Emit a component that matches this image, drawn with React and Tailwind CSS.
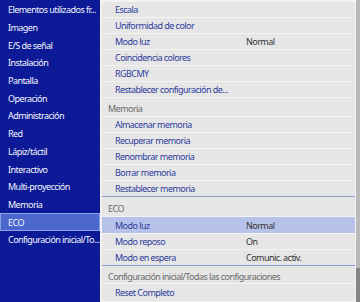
import React from "react";

const leftItems = [
  "Elementos utilizados fr...",
  "Imagen",
  "E/S de señal",
  "Instalación",
  "Pantalla",
  "Operación",
  "Administración",
  "Red",
  "Lápiz/táctil",
  "Interactivo",
  "Multi-proyección",
  "Memoria",
  "ECO",
  "Configuración inicial/To...",
];

// rows of the right panel: kind = item | header, h = row height in px
const rightRows = [
  { kind: "item", label: "Escala", h: "h-[16px]" },
  { kind: "item", label: "Uniformidad de color", h: "h-[16px]" },
  { kind: "item", label: "Modo luz", value: "Normal", h: "h-[16px]" },
  { kind: "item", label: "Coincidencia colores", h: "h-[16px]" },
  { kind: "item", label: "RGBCMY", h: "h-[16px]" },
  { kind: "item", label: "Restablecer configuración de...", h: "h-[16px]" },
  { kind: "header", label: "Memoria", h: "h-[19px]" },
  { kind: "item", label: "Almacenar memoria", h: "h-[16px]" },
  { kind: "item", label: "Recuperar memoria", h: "h-[16px]" },
  { kind: "item", label: "Renombrar memoria", h: "h-[16px]" },
  { kind: "item", label: "Borrar memoria", h: "h-[16px]" },
  { kind: "item", label: "Restablecer memoria", last: true, h: "h-[16px]" },
  { kind: "header", label: "ECO", h: "h-[20px]" },
  { kind: "item", label: "Modo luz", value: "Normal", selected: true, h: "h-[17px]" },
  { kind: "item", label: "Modo reposo", value: "On", h: "h-[16px]" },
  { kind: "item", label: "Modo en espera", value: "Comunic. activ.", last: true, h: "h-[16px]" },
  { kind: "header", label: "Configuración inicial/Todas las configuraciones", h: "h-[18px]" },
  { kind: "item", label: "Reset Completo", h: "h-[18px]" },
];

function RightRow({ row }) {
  if (row.kind === "header") {
    return (
      <div className={row.h + " flex items-center pt-[3px] pl-[6px] text-[#6a6a6a] border-b border-[#f3f3f3] shrink-0"}>
        {row.label}
      </div>
    );
  }
  return (
    <div
      className={
        row.h +
        " flex items-center pl-[13px] border-b shrink-0 " +
        (row.last ? "border-[#8d9bd0] " : "border-[#f3f3f3] ") +
        (row.selected ? "bg-[#b7c2ea]" : "")
      }
    >
      <span className="w-[131px] whitespace-nowrap text-[#2c3c9c]">{row.label}</span>
      {row.value && <span className="text-[#333333]">{row.value}</span>}
    </div>
  );
}

export default function App() {
  return (
    <div
      className="w-[360px] h-[302px] flex overflow-hidden bg-[#e6e6e6] text-[9px] tracking-[-0.55px] leading-none"
      style={{ fontFamily: '"Noto Sans", "Open Sans", sans-serif' }}
    >
      <div className="w-[100px] h-full bg-[#0c1a97] pt-[1px] shrink-0 overflow-hidden">
        {leftItems.map((label) => (
          <div
            key={label}
            className={
              "h-[17.7px] flex items-center whitespace-nowrap text-[#f4f5fb] " +
              (label === "ECO" ? "bg-[#4c68cf] border border-[#8ea0e4] pl-[7px]" : "pl-[8px]")
            }
          >
            {label}
          </div>
        ))}
      </div>
      <div className="w-[2px] bg-[#f2f2f2] shrink-0" />
      <div className="flex-1 flex flex-col border-t-2 border-[#f3f3f3] border-r border-r-[#f3f3f3]">
        {rightRows.map((row, i) => (
          <RightRow key={i} row={row} />
        ))}
      </div>
      <div className="w-[4px] h-full flex flex-col bg-[#b9b9b9] shrink-0">
        <div className="flex-1" />
        <div className="h-[34px] bg-[#858585]" />
      </div>
    </div>
  );
}
